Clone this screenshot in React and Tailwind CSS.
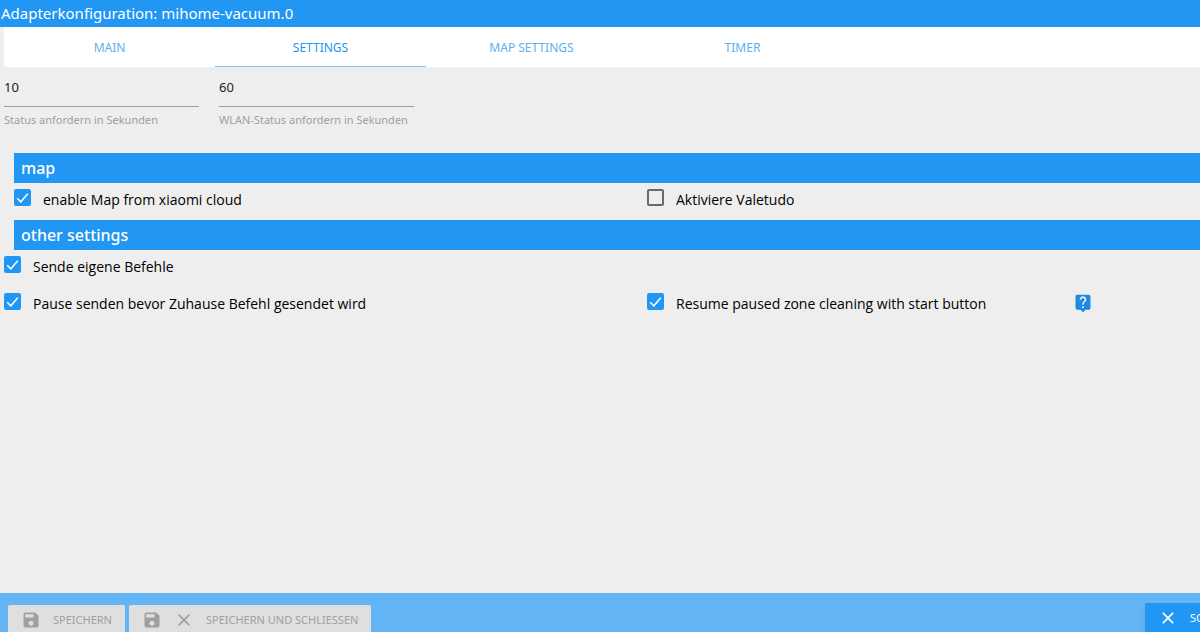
import React, { useState } from "react";
import { MdSave, MdClose, MdLiveHelp } from "react-icons/md";

function Tab({ label, active, onClick }) {
  return (
    <button
      type="button"
      role="tab"
      aria-selected={active}
      onClick={onClick}
      className={
        "h-10 basis-[211px] border-b border-t-2 border-t-transparent text-xs uppercase " +
        (active ? "border-b-[#7cc3fa] text-[#2196f3]" : "border-b-transparent text-[#5cb0f2]")
      }
    >
      {label}
    </button>
  );
}

function NumberField({ id, label, value }) {
  return (
    <div className="flex w-[195px] flex-col">
      <input
        id={id}
        type="text"
        inputMode="numeric"
        defaultValue={value}
        className="h-10 w-full border-b border-[#9e9e9e] bg-transparent text-[13px] text-[#212121] outline-none"
      />
      <label htmlFor={id} className="mt-1 whitespace-nowrap text-[11px] leading-[18px] text-[#9e9e9e]">
        {label}
      </label>
    </div>
  );
}

function Checkbox({ id, label, checked }) {
  return (
    <div className="flex h-[21px] items-start gap-3">
      <span className="grid size-[17px] shrink-0">
        <input
          id={id}
          type="checkbox"
          defaultChecked={checked}
          className="peer col-start-1 row-start-1 size-[17px] appearance-none rounded-[2px] border-2 border-[#6a6a6a] checked:border-[#2196f3] checked:bg-[#2196f3]"
        />
        <svg
          viewBox="0 0 17 17"
          className="pointer-events-none invisible col-start-1 row-start-1 size-[17px] peer-checked:visible"
          fill="none"
          stroke="white"
          strokeWidth="1.5"
          aria-hidden="true"
        >
          <path d="M3.2 9.2 L6.8 12.8 L13.8 4.8" />
        </svg>
      </span>
      <label htmlFor={id} className="font-['Open_Sans',sans-serif] text-[14px] leading-[21px] text-black">
        {label}
      </label>
    </div>
  );
}

function SectionTitle({ children }) {
  return (
    <h2 className="ml-[14px] h-[30px] bg-[#2196f3] px-[7px] text-[16px] font-medium leading-[30px] text-white">
      {children}
    </h2>
  );
}

const TABS = ["Main", "Settings", "Map Settings", "Timer"];

export default function App() {
  const [active, setActive] = useState("Settings");
  return (
    <div className="flex h-screen flex-col overflow-hidden bg-[#eeeeee] font-['Noto_Sans','Open_Sans',sans-serif]">
      <header className="h-[27px] shrink-0 bg-[#2196f3] px-px">
        <h1 className="text-[15px] leading-[27px] text-white">Adapterkonfiguration: mihome-vacuum.0</h1>
      </header>

      <main className="min-h-0 flex-1 overflow-hidden">
        <div role="tablist" className="ml-1 flex bg-white">
          {TABS.map((t) => (
            <Tab key={t} label={t} active={t === active} onClick={() => setActive(t)} />
          ))}
        </div>

        <div className="flex gap-5 pl-1">
          <NumberField id="ping" label="Status anfordern in Sekunden" value="10" />
          <NumberField id="wifi" label="WLAN-Status anfordern in Sekunden" value="60" />
        </div>

        <section className="mt-6">
          <SectionTitle>map</SectionTitle>
          <div className="grid grid-cols-[633px_1fr] pb-[10px] pl-[14px] pt-[6px]">
            <Checkbox id="cloud" label="enable Map from xiaomi cloud" checked />
            <Checkbox id="valetudo" label="Aktiviere Valetudo" />
          </div>
        </section>

        <section>
          <SectionTitle>other settings</SectionTitle>
          <div className="grid grid-cols-[643px_426px_1fr] gap-y-4 pl-1 pt-[6px]">
            <Checkbox id="commands" label="Sende eigene Befehle" checked />
            <div className="col-start-1">
              <Checkbox id="pause" label="Pause senden bevor Zuhause Befehl gesendet wird" checked />
            </div>
            <Checkbox id="resume" label="Resume paused zone cleaning with start button" checked />
            <a href="#help" aria-label="Help" className="justify-self-start text-[#1e88e5]">
              <MdLiveHelp className="size-5" />
            </a>
          </div>
        </section>
      </main>

      <footer className="flex h-[39px] shrink-0 items-start gap-1 overflow-hidden bg-[#64b5f6] pl-2 text-[11px]">
        <button
          type="button"
          disabled
          className="mt-3 flex h-[30px] shrink-0 items-center gap-3 rounded-[2px] bg-[#dfdfdf] px-[13px] uppercase text-[#9f9f9f]"
        >
          <MdSave className="size-5" />
          Speichern
        </button>
        <button
          type="button"
          disabled
          className="mt-3 flex h-[30px] shrink-0 items-center gap-3 rounded-[2px] bg-[#dfdfdf] px-[13px] uppercase text-[#9f9f9f]"
        >
          <MdSave className="size-5" />
          <MdClose className="size-5" />
          Speichern und schliessen
        </button>
        <div className="ml-auto w-[55px] shrink-0">
          <button
            type="button"
            className="mt-[10px] flex h-[30px] items-center gap-3 whitespace-nowrap rounded-[2px] bg-[#2196f3] px-[13px] uppercase text-white shadow-md"
          >
            <MdClose className="size-5 shrink-0" />
            Schliessen
          </button>
        </div>
      </footer>
    </div>
  );
}
